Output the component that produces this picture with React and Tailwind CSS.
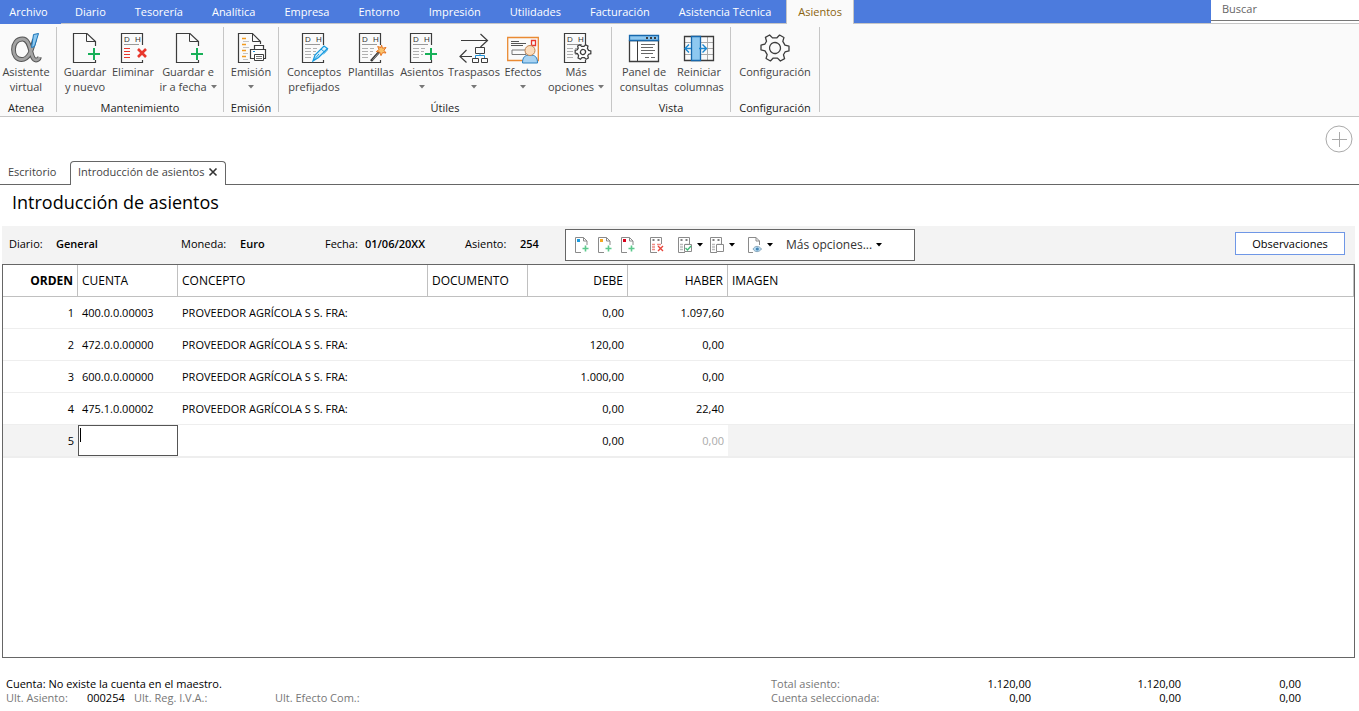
import React, { useState } from 'react'

const Caret = ({ className = 'text-[#777]' }) => (
  <svg className={`inline-block w-[6px] h-[4px] ${className}`} viewBox="0 0 6 4" fill="currentColor" aria-hidden="true">
    <path d="M0 0h6L3 3.5z" />
  </svg>
)

const Icon = ({ children }) => (
  <svg className="w-8 h-8 shrink-0" viewBox="0 0 32 32" fill="none" stroke="#3c3c3c" aria-hidden="true">
    {children}
  </svg>
)

const Plus = () => <path d="M25 16v12M19 22h12" stroke="#17b058" strokeWidth="2" />

// Debit / credit sheet that several ribbon icons are built on
const Sheet = ({ lines = '#b0b0b0' }) => (
  <>
    <path d="M25.5 13V1.5H4.5v29h21V28" strokeWidth="1.2" />
    <text x="7" y="10" fontSize="8" fontFamily="Liberation Sans, sans-serif" fill="#333" stroke="none">D</text>
    <text x="18" y="10" fontSize="8" fontFamily="Liberation Sans, sans-serif" fill="#333" stroke="none">H</text>
    <path d="M7 12.5h15" stroke="#999" />
    <path d="M7 16.5h6M7 19.5h6M7 22.5h6M7 25.5h6" stroke={lines} />
    {lines !== '#e8372c' && <path d="M15 16.5h4M15 19.5h3M15 22.5h2" stroke={lines} />}
  </>
)

const NewPageIcon = () => (
  <Icon>
    <path d="M26.5 14V9.5L18 1.5H4.5v29h22V28" strokeWidth="1.2" />
    <path d="M17.5 1.5v8h9" />
    <Plus />
  </Icon>
)

const AlphaIcon = () => (
  <Icon>
    <path d="M24.5 7.500C22 16 20 27.500 11.500 27.500C6.500 27.500 3.500 23 3.500 17.500C3.500 12 6.500 7 12.500 7C22 7 19.500 28 26 28C28 28 29 27 29.500 25" stroke="#555" strokeWidth="4.800" />
    <path d="M24.5 7.500C22 16 20 27.500 11.500 27.500C6.500 27.500 3.500 23 3.500 17.500C3.500 12 6.500 7 12.500 7C22 7 19.500 28 26 28C28 28 29 27 29.500 25" stroke="#a3a3a3" strokeWidth="2.800" />
    <path d="M23.500 2.500l5-1-4 13-3 1z" fill="#8cc8f0" stroke="#1b74b8" />
  </Icon>
)

const DeleteIcon = () => (
  <Icon>
    <Sheet lines="#e8372c" />
    <path d="M21 17l8 8M29 17l-8 8" stroke="#e8372c" strokeWidth="2.600" />
  </Icon>
)

const PrintIcon = () => (
  <Icon>
    <path d="M25.5 12V9.5L17.500 1.5H3.500v29H15" strokeWidth="1.2" />
    <path d="M17.500 1.5v8h8" />
    <path d="M7 6.500h4M7 12.500h4M7 18.500h4M7 24.500h4" stroke="#f29a1f" strokeWidth="1.300" />
    <path d="M8 9.500h6M8 15.500h6M8 21.500h5M8 27.500h5" stroke="#c4c4c4" />
    <path d="M19.500 17.500v-4h9v4M19.500 26.500h-4v-9h15v9h-4" fill="#fff" strokeWidth="1.2" />
    <path d="M19.500 22.500h9v6h-9z" fill="#fff" />
    <path d="M21 24.500h6M21 26.500h6" stroke="#777" />
    <path d="M18 19.500h2" stroke="#1b8fd6" />
  </Icon>
)

const PenIcon = () => (
  <Icon>
    <Sheet />
    <path d="M15 29l2-6 9-9 3.500 2.500-9 9z" fill="#d8effb" stroke="#169be0" strokeWidth="1.300" />
    <path d="M15 29l6-7M23 17l3.500 3M29 16c1.500 2-1.500 4-3.500 6" stroke="#169be0" />
  </Icon>
)

const WandIcon = () => (
  <Icon>
    <Sheet />
    <path d="M16 29L25 19" stroke="#333" strokeWidth="2.600" />
    <path d="M17.500 28l6-7" stroke="#aaa" strokeWidth="0.800" />
    <path d="M26.500 13l1 3.200 3.500-.7-2 2.800 2 2.700-3.400-.4-1.600 3-1.200-3.400-3.500-.6 2.800-2.100-1.400-3 3.200 1z" fill="#f9c26b" stroke="#e77320" />
  </Icon>
)

const AddEntryIcon = () => (
  <Icon>
    <Sheet />
    <Plus />
  </Icon>
)

const TransferIcon = () => (
  <Icon>
    <path d="M3 8.500h26M22.500 2l7 6.500-7 6.500M14 24.500H2M8.500 18l-6.500 6.500 6.500 6" strokeWidth="1.2" />
    <path d="M17.500 15.500h9v6h-9zM14.500 26.500h6v4h-6zM23.500 26.500h6v4h-6z" />
    <path d="M22 21.500v2M17.500 26v-2.500h9V26" stroke="#1b8fd6" />
  </Icon>
)

const EffectsIcon = () => (
  <Icon>
    <path d="M.7 5.500h30.600v23H.7z" stroke="#ea8a33" strokeWidth="1.300" />
    <path d="M4 9.500h8M4 11.500h15M4 13.500h12" stroke="#555" />
    <path d="M5 18h14v4.500H5z" stroke="#777" />
    <path d="M24.500 8.500h4v5h-4z" stroke="#e8372c" strokeWidth="1.300" />
    <path d="M15.500 31c0-6 2.500-8 7.500-8s7.500 2 7.500 8z" fill="#a9d3f2" stroke="#2b80c0" />
    <circle cx="23" cy="18.500" r="5" fill="#fbdcbc" stroke="#c08552" />
  </Icon>
)

const GEAR = 'M-2.500-13.500h5l1 3.900 3.700 2.100 4-1.100 2.400 4.200-2.900 2.800v3.200l2.900 2.800-2.400 4.200-4-1.100-3.700 2.100-1 3.900h-5l-1-3.900-3.700-2.100-4 1.100-2.400-4.200 2.900-2.800v-3.200l-2.900-2.800 2.400-4.200 4 1.100 3.700-2.100z'

const MoreIcon = () => (
  <Icon>
    <Sheet />
    <g transform="translate(23 20) rotate(30) scale(.56)" fill="#fff" strokeWidth="2.200">
      <path d={GEAR} />
      <circle r="4.500" />
    </g>
  </Icon>
)

const PanelIcon = () => (
  <Icon>
    <path d="M1.500 8.500h29v21h-29z" fill="#fff" strokeWidth="1.300" />
    <path d="M1.500 3.500h29v5h-29z" fill="#8ec8f0" stroke="#1768ad" strokeWidth="1.300" />
    <path d="M18 6h2M22 6h2M26 6h2" strokeWidth="2" />
    <path d="M9.500 9v20" />
    <path d="M13 12.500h14M13 15.500h12M13 18.500h14M13 21.500h12M17 25.500h4M23 25.500h4" stroke="#666" />
  </Icon>
)

const ColumnsIcon = () => (
  <Icon>
    <path d="M1 10.500h30M1 16.500h30M1 22.500h30M24.500 4v24" stroke="#aaa" />
    <path d="M1.500 4.500h29v24h-29z" strokeWidth="1.300" />
    <path d="M8.500 4.500h9v24h-9z" fill="#8ec8f0" stroke="#1768ad" strokeWidth="1.300" />
    <path d="M8 16.500H2M6 12.500l-4 4 4 4M16 16.500h7M19.500 12.500l4 4-4 4" stroke="#1b86cf" strokeWidth="1.400" />
  </Icon>
)

const SettingsIcon = () => (
  <Icon>
    <g transform="translate(16 16) rotate(30)" strokeWidth="1.300" strokeLinejoin="round">
      <path d={GEAR} />
      <circle r="5.500" />
    </g>
  </Icon>
)

const menus = ['Diario', 'Tesorería', 'Analítica', 'Empresa', 'Entorno', 'Impresión', 'Utilidades', 'Facturación', 'Asistencia Técnica']

const ribbon = [
  { label: 'Atenea', items: [
    { lines: ['Asistente', 'virtual'], icon: AlphaIcon, width: 'w-[52px]' },
  ] },
  { label: 'Mantenimiento', items: [
    { lines: ['Guardar', 'y nuevo'], icon: NewPageIcon, width: 'w-12' },
    { lines: ['Eliminar'], icon: DeleteIcon, width: 'w-12' },
    { lines: ['Guardar e', 'ir a fecha'], icon: NewPageIcon, width: 'w-[62px]', menu: true },
  ] },
  { label: 'Emisión', items: [
    { lines: ['Emisión', ''], icon: PrintIcon, width: 'w-[46px]', menu: true },
  ] },
  { label: 'Útiles', items: [
    { lines: ['Conceptos', 'prefijados'], icon: PenIcon, width: 'w-[62px]' },
    { lines: ['Plantillas'], icon: WandIcon, width: 'w-[52px]' },
    { lines: ['Asientos', ''], icon: AddEntryIcon, width: 'w-[50px]', menu: true },
    { lines: ['Traspasos', ''], icon: TransferIcon, width: 'w-[54px]', menu: true },
    { lines: ['Efectos', ''], icon: EffectsIcon, width: 'w-[44px]', menu: true },
    { lines: ['Más', 'opciones'], icon: MoreIcon, width: 'w-[62px]', menu: true },
  ] },
  { label: 'Vista', items: [
    { lines: ['Panel de', 'consultas'], icon: PanelIcon, width: 'w-14' },
    { lines: ['Reiniciar', 'columnas'], icon: ColumnsIcon, width: 'w-[54px]' },
  ] },
  { label: 'Configuración', items: [
    { lines: ['Configuración'], icon: SettingsIcon, width: 'w-[80px]' },
  ] },
]

const RibbonButton = ({ item }) => {
  const Glyph = item.icon
  return (
    <button type="button" className={`${item.width} flex flex-col items-center text-[#444] whitespace-nowrap hover:bg-[#e8eefb]`}>
      <Glyph />
      {item.lines.map((line, i) => (
        <span key={i} className="h-[15px] flex items-center gap-1">
          {line}
          {item.menu && i === item.lines.length - 1 && <Caret />}
        </span>
      ))}
    </button>
  )
}

const SmallIcon = ({ children }) => (
  <svg className="w-4 h-4" viewBox="0 0 16 16" fill="none" stroke="#8a8a8a" aria-hidden="true">
    {children}
  </svg>
)

const SmallAdd = ({ color }) => (
  <SmallIcon>
    <path d="M7 15.500H1.500V.5h8l3.500 3.500v4M9.500.5V4H13" />
    <path d="M3 2h3v3H3z" fill={color} stroke="none" />
    <path d="M11.500 8.500v6M8.500 11.500h6" stroke="#5cc98c" strokeWidth="1.600" />
  </SmallIcon>
)

const SmallSheet = ({ lines = '#bbb', children }) => (
  <SmallIcon>
    <path d="M8 15.500H1.500V.5h11V7" />
    <path d="M3.500 3h2M8.500 3h2" stroke="#555" strokeWidth="1.600" />
    <path d="M3 7.500h3M3 10h3M3 12.500h3M8 7.500h4" stroke={lines} strokeWidth="1.300" />
    {children}
  </SmallIcon>
)

const ToolButton = ({ label, menu, children }) => (
  <button type="button" aria-label={label} className="flex items-center gap-1">
    {children}
    {menu && <Caret className="text-black" />}
  </button>
)

const entries = [
  { orden: 1, cuenta: '400.0.0.00003', concepto: 'PROVEEDOR AGRÍCOLA S S. FRA:', debe: '0,00', haber: '1.097,60' },
  { orden: 2, cuenta: '472.0.0.00000', concepto: 'PROVEEDOR AGRÍCOLA S S. FRA:', debe: '120,00', haber: '0,00' },
  { orden: 3, cuenta: '600.0.0.00000', concepto: 'PROVEEDOR AGRÍCOLA S S. FRA:', debe: '1.000,00', haber: '0,00' },
  { orden: 4, cuenta: '475.1.0.00002', concepto: 'PROVEEDOR AGRÍCOLA S S. FRA:', debe: '0,00', haber: '22,40' },
]

const Field = ({ label, value, labelWidth, width }) => (
  <div className={`flex ${width}`}>
    <span className={labelWidth}>{label}</span>
    <span className="font-semibold">{value}</span>
  </div>
)

const App = () => {
  const [cuenta, setCuenta] = useState('')

  return (
    <div className="min-h-screen flex flex-col bg-white text-black text-[11px] leading-[14px] font-['Open_Sans',sans-serif]">
      {/* Menu */}
      <header className="h-6 flex bg-[#4c7bdd] text-white whitespace-nowrap">
        <button type="button" className="w-[61px] pr-1 shrink-0">Archivo</button>
        <nav className="flex-1 flex gap-px border-b border-[#c6c6c6]">
          {menus.map((name) => (
            <button type="button" key={name} className="px-[14px]">{name}</button>
          ))}
          <button type="button" className="-mb-px px-[11px] border-x border-[#c6c6c6] bg-[#fafafa] text-[#8a6410]">Asientos</button>
        </nav>
        <div className="w-[148px] border-b border-[#c6c6c6] bg-white">
          <input
            type="text"
            aria-label="Buscar"
            placeholder="Buscar"
            className="block w-full h-[21px] px-[11px] pb-[3px] border-b border-[#777] placeholder:text-[#666] text-black outline-none"
          />
        </div>
      </header>

      {/* Ribbon */}
      <div className="h-[93px] flex pt-[3px] pb-1 bg-[#fafafa] border-b border-[#c6c6c6]">
        {ribbon.map((group) => (
          <section key={group.label} className="flex flex-col justify-between px-1 pt-[5px] border-r border-[#c6c6c6] first:pl-0">
            <div className="flex">
              {group.items.map((item) => (
                <RibbonButton key={item.lines.join(' ')} item={item} />
              ))}
            </div>
            <h2 className="h-[11px] leading-[14px] text-center text-[#222]">{group.label}</h2>
          </section>
        ))}
      </div>

      {/* Tabs */}
      <div className="pt-2 pr-[6px] flex justify-end">
        <button type="button" aria-label="Añadir">
          <svg className="w-7 h-7" viewBox="0 0 28 28" fill="none" stroke="#aaa">
            <circle cx="14" cy="14" r="13" />
            <path d="M14.500 7v15M7 14.500h15" />
          </svg>
        </button>
      </div>
      <div className="h-8 flex items-end border-b border-[#666] text-[#444]">
        <button type="button" className="w-[70px] h-6 pl-2 text-left">Escritorio</button>
        <div className="-mb-px h-6 px-[7px] pb-[3px] flex items-center gap-1 border border-b-0 border-[#666] rounded-t bg-white">
          <span>Introducción de asientos</span>
          <button type="button" aria-label="Cerrar">
            <svg className="w-[10px] h-[10px]" viewBox="0 0 10 10" stroke="#333" strokeWidth="1.600">
              <path d="M1.500 1.500l7 7M8.500 1.500l-7 7" />
            </svg>
          </button>
        </div>
      </div>

      <h1 className="h-[41px] pl-3 text-[18px] leading-[35px]">Introducción de asientos</h1>

      {/* Entry header */}
      <div className="h-[38px] ml-[2px] mr-1 pl-[7px] pr-[10px] pb-[3px] flex items-center bg-[#f3f3f3] whitespace-nowrap">
        <Field label="Diario:" value="General" labelWidth="w-[47px]" width="w-[172px]" />
        <Field label="Moneda:" value="Euro" labelWidth="w-[59px]" width="w-[144px]" />
        <Field label="Fecha:" value="01/06/20XX" labelWidth="w-10" width="w-[140px]" />
        <Field label="Asiento:" value="254" labelWidth="w-[55px]" width="w-[100px]" />
        <div className="h-8 w-[350px] pl-2 flex items-center self-end border border-[#666] bg-white">
          <div className="flex gap-[7px]">
            <ToolButton label="Insertar apunte"><SmallAdd color="#1b9be0" /></ToolButton>
            <ToolButton label="Insertar cobro"><SmallAdd color="#f5a623" /></ToolButton>
            <ToolButton label="Insertar pago"><SmallAdd color="#d9001b" /></ToolButton>
          </div>
          <div className="ml-[13px] flex gap-3">
            <ToolButton label="Eliminar apunte">
              <SmallSheet lines="#f08a84"><path d="M9 9l5 5M14 9l-5 5" stroke="#e8443a" strokeWidth="1.400" /></SmallSheet>
            </ToolButton>
            <ToolButton label="Validar" menu>
              <SmallSheet><path d="M7.500 7.500h7v7h-7z" fill="#fff" /><path d="M8.500 11l2 2 3.500-4" stroke="#3dba75" strokeWidth="1.300" /></SmallSheet>
            </ToolButton>
          </div>
          <div className="ml-[6px] flex gap-3">
            <ToolButton label="Copiar" menu>
              <SmallSheet><path d="M7.500 7.500h7v7h-7z" fill="#fff" /></SmallSheet>
            </ToolButton>
            <ToolButton label="Ver documento" menu>
              <SmallIcon>
                <path d="M6 15.500H1.500V.5h7.500l3.500 3.500v4M9 .5V4h3.500" />
                <path d="M6 12c2-3.500 6-3.500 8.500 0-2.500 3.500-6.500 3.500-8.500 0z" fill="#b9dcf3" stroke="#8aa9bd" />
                <circle cx="10.300" cy="12" r="1.600" fill="#4385b5" stroke="none" />
              </SmallIcon>
            </ToolButton>
          </div>
          <button type="button" className="ml-[13px] flex items-center gap-1 text-[12px] text-[#333]">
            Más opciones...
            <Caret className="text-black" />
          </button>
        </div>
        <button type="button" className="ml-auto w-[110px] h-[23px] border border-[#6f97e6] bg-white">Observaciones</button>
      </div>

      {/* Entries */}
      <main className="flex-1 ml-[2px] mr-1 border border-[#666]">
        <table className="w-full table-fixed border-separate border-spacing-0">
          <colgroup>
            <col className="w-[75px]" />
            <col className="w-[100px]" />
            <col className="w-[250px]" />
            <col className="w-[100px]" />
            <col className="w-[100px]" />
            <col className="w-[100px]" />
            <col />
          </colgroup>
          <thead>
            <tr className="h-8 text-left text-[12px] *:px-1 *:font-normal *:border-r *:border-b *:border-[#c0c0c0]">
              <th className="text-right"><b>ORDEN</b></th>
              <th>CUENTA</th>
              <th>CONCEPTO</th>
              <th>DOCUMENTO</th>
              <th className="text-right">DEBE</th>
              <th className="text-right">HABER</th>
              <th>IMAGEN</th>
            </tr>
          </thead>
          <tbody>
            {entries.map((entry) => (
              <tr key={entry.orden} className="h-8 *:px-1 *:border-b *:border-[#eee]">
                <td className="text-right">{entry.orden}</td>
                <td>{entry.cuenta}</td>
                <td>{entry.concepto}</td>
                <td></td>
                <td className="text-right">{entry.debe}</td>
                <td className="text-right">{entry.haber}</td>
                <td></td>
              </tr>
            ))}
            <tr className="h-[33px] *:border-b-2 *:border-[#eee]">
              <td className="px-1 bg-[#f3f3f3] text-right">5</td>
              <td className="relative">
                <input
                  type="text"
                  aria-label="Cuenta"
                  value={cuenta}
                  onChange={(e) => setCuenta(e.target.value)}
                  className="block w-full h-[31px] px-[3px] border border-[#555] outline-none"
                />
                {cuenta === '' && <span className="absolute left-[2px] top-[3px] w-px h-[14px] bg-black pointer-events-none"></span>}
              </td>
              <td></td>
              <td></td>
              <td className="px-1 text-right">0,00</td>
              <td className="px-1 text-right text-[#aaa]">0,00</td>
              <td className="bg-[#f3f3f3]"></td>
            </tr>
          </tbody>
        </table>
      </main>

      {/* Status */}
      <footer className="h-[53px] pt-[19px] pl-[6px] pr-[58px] flex justify-between whitespace-nowrap">
        <div>
          <p>Cuenta: No existe la cuenta en el maestro.</p>
          <p className="flex text-[#777]">
            <span className="w-[81px]">Ult. Asiento:</span>
            <span className="w-[47px] text-black">000254</span>
            <span className="w-[141px]">Ult. Reg. I.V.A.:</span>
            <span>Ult. Efecto Com.:</span>
          </p>
        </div>
        <div className="grid grid-cols-[140px_120px_150px_120px] content-start text-right">
          <span className="text-left text-[#777]">Total asiento:</span>
          <span>1.120,00</span>
          <span>1.120,00</span>
          <span>0,00</span>
          <span className="text-left text-[#777]">Cuenta seleccionada:</span>
          <span>0,00</span>
          <span>0,00</span>
          <span>0,00</span>
        </div>
      </footer>
    </div>
  )
}

export default App
